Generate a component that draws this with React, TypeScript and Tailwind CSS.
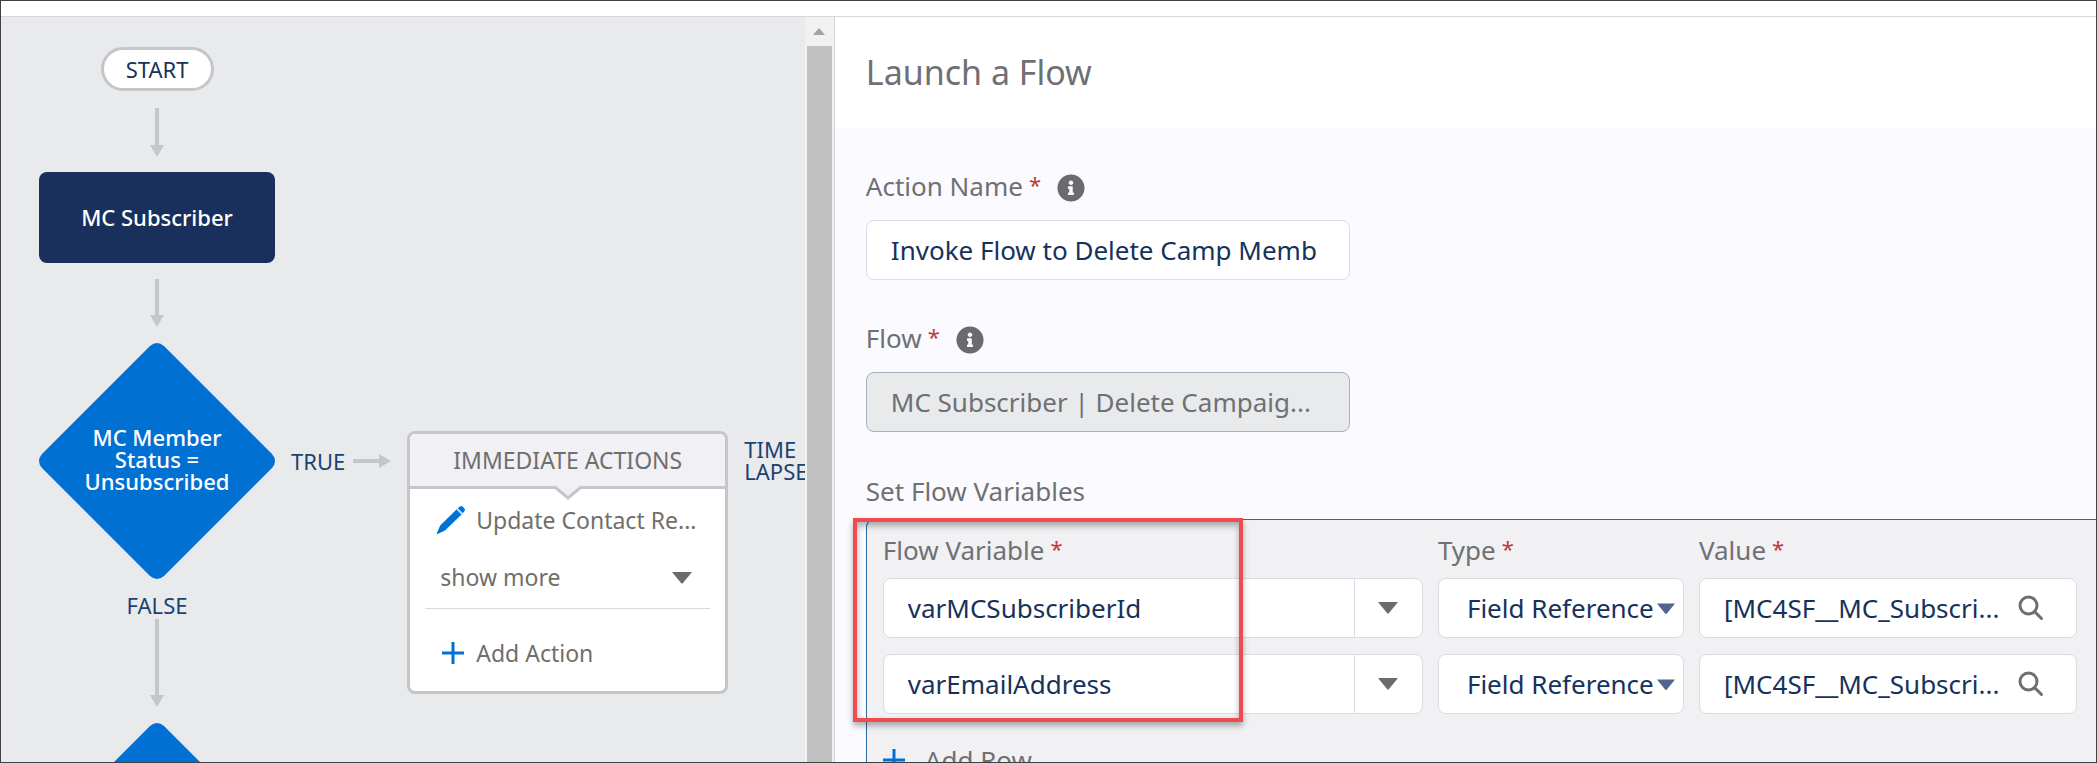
import { FaInfoCircle } from 'react-icons/fa'

const rows = [
  { variable: 'varMCSubscriberId', value: '[MC4SF__MC_Subscri...' },
  { variable: 'varEmailAddress', value: '[MC4SF__MC_Subscri...' },
]

function ArrowDown({ length }: { length: number }) {
  return (
    <svg width="14" height={length} className="block shrink-0 text-[#c4c6ca]" fill="currentColor">
      <rect x="5" y="0" width="4" height={length - 8} />
      <path d={`M0 ${length - 12} H14 L7 ${length} Z`} />
    </svg>
  )
}

function ArrowRight() {
  return (
    <svg width="38" height="14" className="block shrink-0 text-[#c4c6ca]" fill="currentColor">
      <rect x="0" y="5" width="30" height="4" />
      <path d="M26 0 V14 L38 7 Z" />
    </svg>
  )
}

function Caret({ className }: { className: string }) {
  return (
    <svg width="20" height="12" viewBox="0 0 20 12" className={className} fill="currentColor">
      <path d="M0 0 H20 L11 11 Q10 12 9 11 Z" />
    </svg>
  )
}

function Diamond({ children }: { children?: React.ReactNode }) {
  return (
    <div className="relative flex h-[236px] w-[236px] shrink-0 items-center justify-center">
      <svg viewBox="0 0 236 236" className="absolute inset-0 h-full w-full">
        <path
          d="M111 3 Q118 -3 125 3 L233 111 Q239 118 233 125 L125 233 Q118 239 111 233 L3 125 Q-3 118 3 111 Z"
          fill="#0070d2"
        />
      </svg>
      <p className="relative w-44 pb-1 text-center text-[22px] leading-[22px] font-medium text-white">{children}</p>
    </div>
  )
}

function PlusIcon() {
  return (
    <svg width="22" height="22" viewBox="0 0 22 22" className="shrink-0" stroke="#0070d2" strokeWidth="3">
      <path d="M11 0 V22 M0 11 H22" />
    </svg>
  )
}

function PencilIcon() {
  return (
    <svg width="30" height="30" viewBox="0 0 30 30" className="shrink-0" fill="#0070d2">
      <path d="M20.500 4.500 L25.500 9.500 L9 25.500 L1.500 29 Q0.500 29.300 0.800 28.200 L4.200 20.500 Z" />
      <path d="M21.700 3.300 L24 1.400 Q25.500 0.500 27 2 L28.200 3.200 Q29.600 4.800 28.300 6.300 L26.700 8.300 Z" />
      <path d="M20.300 3.800 L26.200 9.700" stroke="#8fc1ee" strokeWidth="1.200" />
    </svg>
  )
}

function SearchIcon() {
  return (
    <svg width="26" height="26" viewBox="0 0 26 26" fill="none" stroke="#706e6b" strokeWidth="3" strokeLinecap="round">
      <circle cx="10.500" cy="10.500" r="8.500" />
      <path d="M16.500 16.500 L23.500 23.500" />
    </svg>
  )
}

function Label({ text, htmlFor, info }: { text: string; htmlFor?: string; info?: boolean }) {
  return (
    <div className="flex h-9 items-center text-[26px] leading-9 text-[#6f7074]">
      <label htmlFor={htmlFor}>{text}</label>
      <span className="ml-1.5 self-start text-[22px] leading-8 text-[#c23934]">*</span>
      {info && (
        <button type="button" aria-label={`About ${text}`} className="mt-1 ml-4 text-[#6b6b6f]">
          <FaInfoCircle size={28} />
        </button>
      )}
    </div>
  )
}

function Canvas() {
  return (
    <section className="flex min-w-0 flex-1 items-start overflow-hidden bg-[#e9eaec] pl-[38px]">
      <div className="flex w-[236px] shrink-0 flex-col items-center pt-[30px]">
        <div className="flex h-[44px] w-[113px] items-center justify-center rounded-full border-[3px] border-[#c4c6ca] bg-white text-[22px] text-[#16325c]">
          START
        </div>
        <div className="mt-[17px]">
          <ArrowDown length={49} />
        </div>
        <div className="mt-[15px] flex h-[91px] w-full items-center justify-center rounded-lg bg-[#18305b] text-[22px] font-medium text-white">
          MC Subscriber
        </div>
        <div className="mt-4">
          <ArrowDown length={48} />
        </div>
        <div className="mt-4">
          <Diamond>MC Member Status = Unsubscribed</Diamond>
        </div>
        <span className="mt-[15px] text-[22px] leading-[22px] text-[#1a4272]">FALSE</span>
        <div className="mt-[3px]">
          <ArrowDown length={88} />
        </div>
        <div className="mt-4">
          <Diamond />
        </div>
      </div>

      <div className="mt-[414px] flex shrink-0 items-start">
        <div className="mt-[19px] flex items-center gap-2 pr-4 pl-4">
          <span className="text-[22px] leading-[22px] text-[#1a4272]">TRUE</span>
          <ArrowRight />
        </div>
        <ActionsCard />
        <p className="mt-[7px] ml-4 w-24 text-[22px] leading-[22px] text-[#1a4272]">TIME LAPSE</p>
      </div>
    </section>
  )
}

function ActionsCard() {
  return (
    <div className="w-[321px] rounded-lg border-[3px] border-[#c4c6ca] bg-white">
      <div className="relative rounded-t-md border-b-[3px] border-[#c4c6ca] bg-[#f1f1f5] text-center text-[23px] leading-[52px] text-[#706e6b]">
        IMMEDIATE ACTIONS
        <svg width="30" height="17" viewBox="0 0 30 17" className="absolute top-[50px] left-1/2 -translate-x-1/2">
          <path d="M2 2 L15 14 L28 2 V0 H2 Z" fill="#f1f1f5" />
          <path d="M2 3 L15 14 L28 3" fill="none" stroke="#c4c6ca" strokeWidth="3" />
        </svg>
      </div>
      <div className="px-[15px] text-[23px] text-[#706e6b]">
        <a href="#update" className="flex h-[62px] items-center gap-2.5 pl-[11px]">
          <PencilIcon />
          Update Contact Re...
        </a>
        <button type="button" className="flex h-[58px] w-full items-center justify-between border-b border-[#d8dadd] pr-[18px] pb-1 pl-[15px]">
          show more
          <Caret className="text-[#6b6b6b]" />
        </button>
        <button type="button" className="flex h-[82px] w-full items-center gap-3 pt-1.5 pl-[17px]">
          <PlusIcon />
          Add Action
        </button>
      </div>
    </div>
  )
}

function VariableRow({ variable, value }: { variable: string; value: string }) {
  return (
    <div className="grid grid-cols-[minmax(0,540fr)_minmax(0,246fr)_minmax(0,378fr)] gap-[15px] text-[26px] text-[#16325c]">
      <div className="flex h-[60px] overflow-hidden rounded-lg border border-[#d8dde6] bg-white">
        <input aria-label="Flow Variable" defaultValue={variable} className="min-w-0 flex-1 pl-6 outline-none" />
        <button
          type="button"
          aria-label="Show variables"
          className="flex w-[68px] items-center justify-center border-l border-[#d8dde6]"
        >
          <Caret className="text-[#6b6b6b]" />
        </button>
      </div>
      <div className="relative h-[60px] rounded-lg border border-[#d8dde6] bg-white">
        <select aria-label="Type" className="h-full w-full appearance-none pl-7 outline-none">
          <option>Field Reference</option>
        </select>
        <Caret className="pointer-events-none absolute top-6 right-2 w-[18px] text-[#506690]" />
      </div>
      <div className="flex h-[60px] items-center rounded-lg border border-[#d8dde6] bg-white pr-8 pl-6">
        <input aria-label="Value" defaultValue={value} className="min-w-0 flex-1 outline-none" />
        <button type="button" aria-label="Search fields">
          <SearchIcon />
        </button>
      </div>
    </div>
  )
}

function LaunchFlow() {
  return (
    <section className="flex w-[60.2%] shrink-0 flex-col bg-[#fafaff]">
      <h1 className="bg-white py-8 pl-[31px] text-[34px] leading-[47px] text-[#6f7074]">Launch a Flow</h1>
      <form className="pt-10 pl-[31px]">
        <Label text="Action Name" htmlFor="action-name" info />
        <div className="mt-4 h-[60px] w-[484px] rounded-lg border border-[#d8dde6] bg-white pr-8 pl-6">
          <input
            id="action-name"
            defaultValue="Invoke Flow to Delete Camp Member"
            className="h-full w-full text-[26px] text-[#16325c] outline-none"
          />
        </div>
        <div className="mt-10">
          <Label text="Flow" htmlFor="flow" info />
        </div>
        <input
          id="flow"
          readOnly
          defaultValue="MC Subscriber | Delete Campaig..."
          className="mt-4 h-[60px] w-[484px] rounded-lg border border-[#a8b0be] bg-[#e9eaec] pr-6 pl-6 text-[26px] text-[#6f7074] outline-none"
        />

        <h2 className="mt-[41px] text-[26px] leading-9 text-[#6f7074]">Set Flow Variables</h2>
        <div className="relative mt-2.5 rounded-tl-lg border-t border-l border-[#2a6a9e] bg-[#f1f1f4] pt-3 pr-[19px] pb-10 pl-4">
          <div className="grid grid-cols-[minmax(0,540fr)_minmax(0,246fr)_minmax(0,378fr)] gap-[15px]">
            <Label text="Flow Variable" />
            <Label text="Type" />
            <Label text="Value" />
          </div>
          <div className="mt-2.5 flex flex-col gap-4">
            {rows.map((row) => (
              <VariableRow key={row.variable} {...row} />
            ))}
          </div>
          <button type="button" className="mt-7 flex items-center gap-5 text-[26px] leading-9 text-[#6f7074]">
            <PlusIcon />
            Add Row
          </button>
          <div className="pointer-events-none absolute -top-0.5 -left-3.5 h-[204px] w-[390px] border-4 border-[#ef4b50] shadow-[0_4px_6px_rgba(0,0,0,0.3),inset_0_4px_6px_rgba(0,0,0,0.3)]" />
        </div>
      </form>
    </section>
  )
}

export default function App() {
  return (
    <main className="flex h-screen flex-col overflow-hidden border border-[#414045] bg-white font-['Noto_Sans',sans-serif]">
      <div className="h-4 shrink-0 border-b border-[#d8d8da] bg-white" />
      <div className="flex min-h-0 flex-1">
        <Canvas />
        <div className="flex w-[30px] shrink-0 flex-col border-r border-[#d4d5d8] bg-[#f1f1f1] pr-0.5 pl-0.5">
          <button type="button" aria-label="Scroll up" className="flex h-[29px] shrink-0 items-center justify-center">
            <svg width="12" height="7" fill="#a3a3a3">
              <path d="M0 7 L6 0 L12 7 Z" />
            </svg>
          </button>
          <div className="flex-1 bg-[#c1c1c1]" />
        </div>
        <LaunchFlow />
      </div>
    </main>
  )
}
